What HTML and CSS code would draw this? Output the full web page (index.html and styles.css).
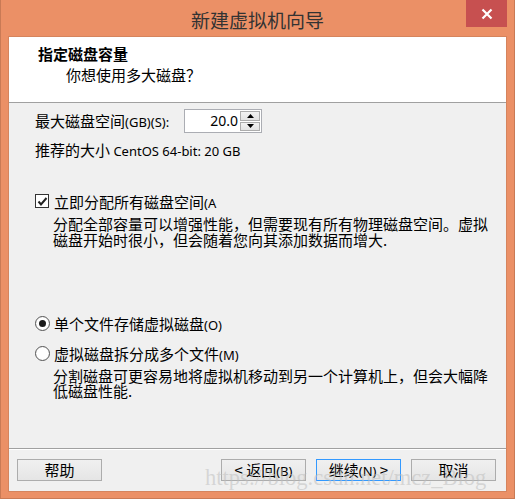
FILE: index.html
```html
<!DOCTYPE html>
<html lang="zh-CN">
<head>
<meta charset="utf-8">
<title>新建虚拟机向导</title>
<link rel="stylesheet" href="styles.css">
</head>
<body>
<div class="window">
  <div class="titlebar">
    <span class="title">新建虚拟机向导</span>
    <div class="close">
      <svg width="12" height="12" viewBox="0 0 12 12"><path d="M1.5 1.5 L10.5 10.5 M10.5 1.5 L1.5 10.5" stroke="#fff" stroke-width="2.2" fill="none"/></svg>
    </div>
  </div>
  <div class="client">
    <div class="header">
      <div class="h-title">指定磁盘容量</div>
      <div class="h-sub">你想使用多大磁盘？</div>
    </div>
    <div class="body">
      <div class="size-row">
        <span class="size-label">最大磁盘空间<span class="lat">(GB)(S):</span></span>
        <div class="spin">
          <div class="spin-input">20.0</div>
          <div class="spin-btns">
            <div class="spin-btn"><svg width="7" height="4" viewBox="0 0 7 4"><path d="M0 4 L3.5 0 L7 4 Z" fill="#000"/></svg></div>
            <div class="spin-btn"><svg width="7" height="4" viewBox="0 0 7 4"><path d="M0 0 L3.5 4 L7 0 Z" fill="#000"/></svg></div>
          </div>
        </div>
      </div>
      <div class="rec">推荐的大小 <span class="lat">CentOS 64-bit: 20 GB</span></div>
      <div class="opt-row check-row">
        <span class="checkbox">
          <svg width="11" height="11" viewBox="0 0 11 11"><path d="M1.5 5.5 L4 8.5 L9.5 2" stroke="#222" stroke-width="2" fill="none"/></svg>
        </span>
        <span class="opt-label">立即分配所有磁盘空间<span class="lat">(A</span></span>
      </div>
      <p class="desc desc1">分配全部容量可以增强性能，但需要现有所有物理磁盘空间。虚拟磁盘开始时很小，但会随着您向其添加数据而增大.</p>
      <div class="opt-row radio-row1">
        <span class="radio on"><span class="dot"></span></span>
        <span class="opt-label">单个文件存储虚拟磁盘<span class="lat">(O)</span></span>
      </div>
      <div class="opt-row radio-row2">
        <span class="radio"></span>
        <span class="opt-label">虚拟磁盘拆分成多个文件<span class="lat">(M)</span></span>
      </div>
      <p class="desc desc2">分割磁盘可更容易地将虚拟机移动到另一个计算机上，但会大幅降低磁盘性能.</p>
    </div>
    <div class="footer">
      <button class="btn">帮助</button>
      <div class="spacer"></div>
      <button class="btn">&lt; 返回<span class="lat">(B)</span></button>
      <button class="btn default">继续<span class="lat">(N)</span> &gt;</button>
      <button class="btn">取消</button>
    </div>
  </div>
  <div class="watermark">https://blog.csdn.net/mcz_Blog</div>
</div>
</body>
</html>
```

FILE: styles.css
```css
* { box-sizing: border-box; }
html, body { margin: 0; padding: 0; background: #ffffff; }
body {
  font-family: "Noto Sans CJK SC", "Noto Sans", sans-serif;
  font-size: 15px;
  color: #000;
}
.window {
  position: relative;
  width: 515px;
  height: 499px;
  background: #eb9066;
  border: 1px solid #c97a55;
  border-top: none;
  display: flex;
  flex-direction: column;
  overflow: hidden;
}
.titlebar {
  height: 36px;
  flex: none;
  display: flex;
  align-items: center;
  justify-content: center;
}
.title {
  font-size: 19px;
  color: #333;
  line-height: 36px;
  margin-top: 3px;
}
.close {
  position: absolute;
  top: 0;
  right: 7px;
  width: 41px;
  height: 27px;
  background: #c75050;
  display: flex;
  align-items: center;
  justify-content: center;
}
.client {
  flex: 1;
  margin: 0 7px 6px 7px;
  border: 1px solid #d5845d;
  background: #f0f0f0;
  display: flex;
  flex-direction: column;
}
.header {
  height: 66px;
  flex: none;
  background: #ffffff;
  border-bottom: 1px solid #a0a0a0;
  padding: 6px 0 0 29px;
  line-height: 21px;
}
.h-title { font-weight: bold; }
.h-sub { padding-left: 28px; }
.lat {
  font-family: "Noto Sans", "Noto Sans CJK SC", sans-serif;
  font-size: 13px;
}
.body {
  flex: 1;
  padding: 6px 0 0 26px;
}
.size-row {
  display: flex;
  align-items: center;
  height: 24px;
}
.size-label {
  width: 149px;
  line-height: 18px;
}
.spin { display: flex; height: 24px; }
.spin-input {
  width: 56px;
  height: 24px;
  background: #fff;
  border: 1px solid #abadb3;
  border-right: none;
  font-family: "Noto Sans", sans-serif;
  font-size: 14px;
  text-align: right;
  padding-right: 2px;
  line-height: 21px;
}
.spin-btns {
  width: 22px;
  display: flex;
  flex-direction: column;
  background: #fff;
  border: 1px solid #abadb3;
  border-left: none;
  padding: 1px 1px 1px 0;
  gap: 1px;
}
.spin-btn {
  flex: 1;
  background: linear-gradient(#f2f2f2, #e3e3e3);
  border: 1px solid #acacac;
  display: flex;
  align-items: center;
  justify-content: center;
}
.rec {
  margin-top: 8px;
  line-height: 18px;
}
.opt-row {
  display: flex;
  align-items: center;
  height: 18px;
}
.check-row { margin-top: 32px; }
.checkbox {
  width: 14px;
  height: 14px;
  border: 1px solid #333;
  background: #fff;
  display: flex;
  align-items: center;
  justify-content: center;
  margin-right: 5px;
}
.radio {
  width: 15px;
  height: 15px;
  border: 1px solid #555;
  border-radius: 50%;
  background: radial-gradient(circle, #ffffff 55%, #e8e8e8 100%);
  display: flex;
  align-items: center;
  justify-content: center;
  margin-right: 4px;
}
.dot {
  width: 7px;
  height: 7px;
  border-radius: 50%;
  background: #1a1a1a;
}
.desc {
  margin: 6px 0 0 0;
  padding-left: 18px;
  width: 453px;
  line-height: 16px;
}
.radio-row1 { margin-top: 66px; }
.radio-row2 { margin-top: 12px; }
.desc2 { line-height: 15px; }
.footer {
  height: 43px;
  flex: none;
  border-top: 1px solid #a0a0a0;
  box-shadow: inset 0 1px 0 #ffffff;
  display: flex;
  align-items: flex-start;
  padding: 10px 10px 0 8px;
  gap: 10px;
}
.spacer { flex: 1; }
.btn {
  width: 85px;
  height: 22px;
  border: 1px solid #acacac;
  background: linear-gradient(#f0f0f0, #e5e5e5);
  font-family: "Noto Sans CJK SC", "Noto Sans", sans-serif;
  font-size: 15px;
  color: #000;
  padding: 0;
  line-height: 18px;
}
.btn.default { border-color: #3399ff; }
.watermark {
  position: absolute;
  left: 204px;
  top: 464px;
  font-family: "Liberation Serif", serif;
  font-size: 22.5px;
  line-height: 28px;
  color: rgba(190, 190, 190, 0.55);
  white-space: nowrap;
  pointer-events: none;
}
```
